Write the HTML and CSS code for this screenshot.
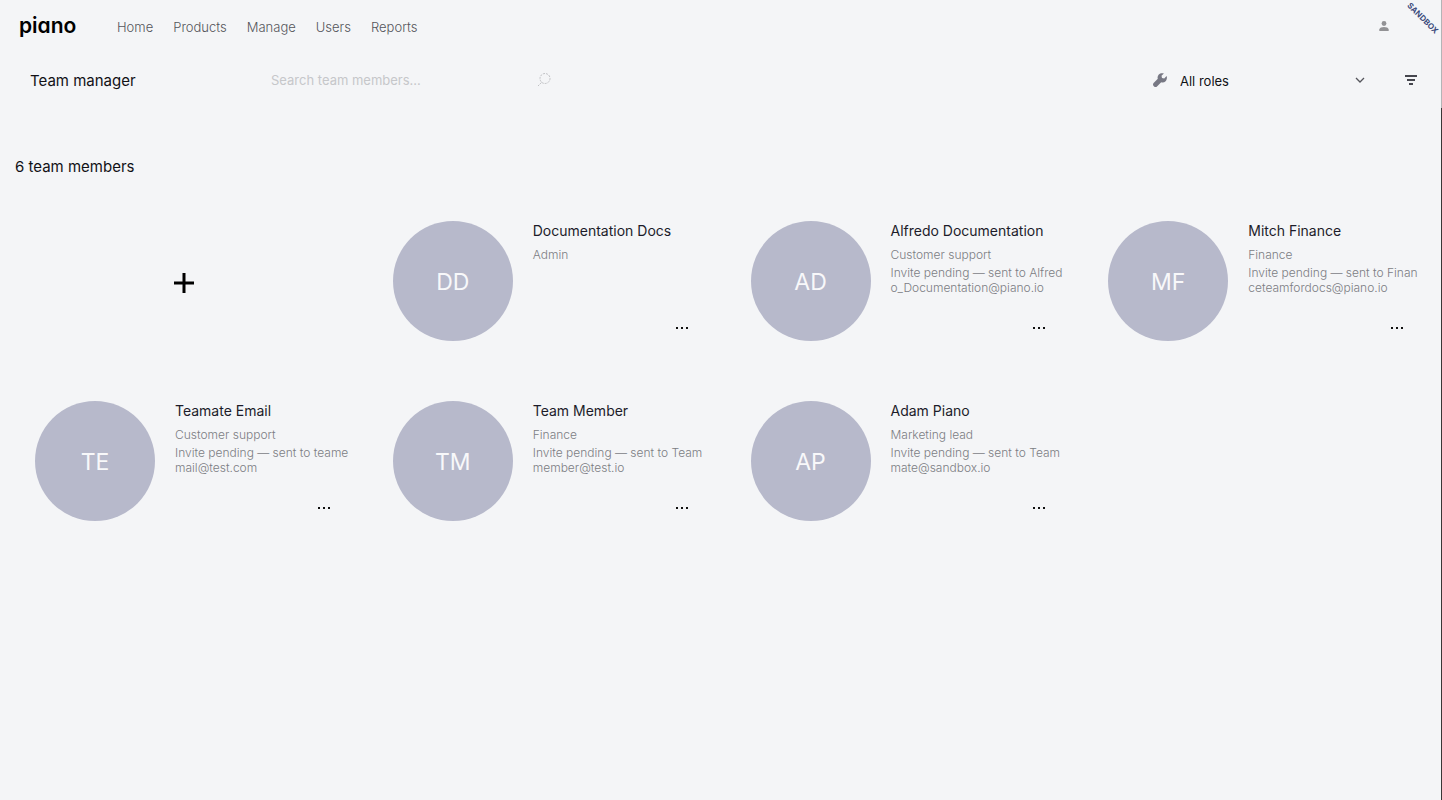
FILE: index.html
```html
<!DOCTYPE html>
<html lang="en">
<head>
    <meta charset="UTF-8">
    <meta name="viewport" content="width=device-width, initial-scale=1.0">
    <title>Team manager - Piano</title>
    <link rel="stylesheet" href="styles.css">
</head>
<body>
    <header class="topbar">
        <a class="logo" href="#">piano</a>
        <nav>
            <ul>
                <li><a href="#">Home</a></li>
                <li><a href="#">Products</a></li>
                <li><a href="#">Manage</a></li>
                <li><a href="#">Users</a></li>
                <li><a href="#">Reports</a></li>
            </ul>
        </nav>
        <button class="account" type="button" aria-label="Account">
            <svg width="10" height="10" viewBox="0 0 10 10"><circle cx="5" cy="2.5" r="2.4"/><path d="M0.3 10V8.6C0.3 6.9 3 6.1 5 6.1s4.7.8 4.7 2.5V10z"/></svg>
        </button>
        <span class="sandbox">SANDBOX</span>
    </header>

    <div class="toolbar">
        <h1>Team manager</h1>
        <form class="search">
            <input type="text" aria-label="Search team members" placeholder="Search team members...">
            <button type="button" aria-label="Search">
                <svg width="14" height="14" viewBox="0 0 14 14"><circle cx="8" cy="5.5" r="5"/><path d="M4.5 9.5L0.5 13.5"/></svg>
            </button>
        </form>
        <div class="roles">
            <svg class="wrench" width="14" height="14" viewBox="0 0 14 14"><path d="M13.6 3.1 11.2 5.5 9 5 8.5 2.8 10.9.5C9.2-.2 7.1.1 5.8 1.4 4.6 2.6 4.3 4.3 4.8 5.8L.6 10c-.8.8-.8 2.1 0 2.9l.5.5c.8.8 2.1.8 2.9 0L8.2 9.2c1.5.5 3.2.2 4.4-1C13.9 6.9 14.2 4.8 13.6 3.1z"/></svg>
            <select aria-label="Role">
                <option>All roles</option>
            </select>
            <svg class="chevron" width="10" height="6" viewBox="0 0 10 6"><path d="M1 1l4 4 4-4"/></svg>
        </div>
        <button class="filter" type="button" aria-label="Filter">
            <svg width="12" height="11" viewBox="0 0 12 11"><path d="M0 1h12M2 5h8M4 9h4"/></svg>
        </button>
    </div>

    <main>
        <h2>6 team members</h2>
        <div class="members">
            <button class="add-member" type="button" aria-label="Add team member">
                <svg width="20" height="20" viewBox="0 0 20 20"><path d="M10 0v20M0 10h20"/></svg>
            </button>
            <article class="member">
                <div class="avatar">DD</div>
                <div class="info">
                    <h3>Documentation Docs</h3>
                    <p class="role">Admin</p>
                    <button class="more" type="button" aria-label="More"><i></i><i></i><i></i></button>
                </div>
            </article>
            <article class="member">
                <div class="avatar">AD</div>
                <div class="info">
                    <h3>Alfredo Documentation</h3>
                    <p class="role">Customer support</p>
                    <p class="invite">Invite pending — sent to Alfred<br>o_Documentation@piano.io</p>
                    <button class="more" type="button" aria-label="More"><i></i><i></i><i></i></button>
                </div>
            </article>
            <article class="member">
                <div class="avatar">MF</div>
                <div class="info">
                    <h3>Mitch Finance</h3>
                    <p class="role">Finance</p>
                    <p class="invite">Invite pending — sent to Finan<br>ceteamfordocs@piano.io</p>
                    <button class="more" type="button" aria-label="More"><i></i><i></i><i></i></button>
                </div>
            </article>
            <article class="member">
                <div class="avatar">TE</div>
                <div class="info">
                    <h3>Teamate Email</h3>
                    <p class="role">Customer support</p>
                    <p class="invite">Invite pending — sent to teame<br>mail@test.com</p>
                    <button class="more" type="button" aria-label="More"><i></i><i></i><i></i></button>
                </div>
            </article>
            <article class="member">
                <div class="avatar">TM</div>
                <div class="info">
                    <h3>Team Member</h3>
                    <p class="role">Finance</p>
                    <p class="invite">Invite pending — sent to Team<br>member@test.io</p>
                    <button class="more" type="button" aria-label="More"><i></i><i></i><i></i></button>
                </div>
            </article>
            <article class="member">
                <div class="avatar">AP</div>
                <div class="info">
                    <h3>Adam Piano</h3>
                    <p class="role">Marketing lead</p>
                    <p class="invite">Invite pending — sent to Team<br>mate@sandbox.io</p>
                    <button class="more" type="button" aria-label="More"><i></i><i></i><i></i></button>
                </div>
            </article>
        </div>
    </main>
</body>
</html>
```
FILE: styles.css
```css
* {
    box-sizing: border-box;
}
body {
    display: flex;
    flex-direction: column;
    margin: 0;
    min-height: 100vh;
    background-color: #f4f5f7;
    color: #111116;
    font-family: Inter, 'Liberation Sans', sans-serif;
}
h1, h2, h3, p {
    margin: 0;
    font-weight: 400;
}
button {
    padding: 0;
    border: none;
    background: none;
    cursor: pointer;
}
svg {
    display: block;
}
.topbar, .toolbar {
    display: flex;
    align-items: center;
    border-right: 1px solid #b4b4b6;
}
.topbar {
    position: relative;
    height: 52px;
    padding: 0 52px 0 19px;
}
.logo {
    width: 98px;
    color: #000;
    font-size: 21px;
    line-height: 30px;
    font-weight: 600;
    font-feature-settings: "cv11";
    text-decoration: none;
}
nav ul {
    display: flex;
    gap: 20px;
    margin: 0;
    padding: 0;
    list-style: none;
}
nav a {
    color: #55565b;
    font-size: 13px;
    line-height: 20px;
    font-weight: 300;
    text-decoration: none;
}
.account {
    margin-left: auto;
    fill: #929295;
}
.sandbox {
    position: absolute;
    top: 12px;
    right: -2px;
    color: #3c4b7c;
    font-size: 8px;
    line-height: 12px;
    font-weight: 700;
    transform: rotate(45deg);
}
.toolbar {
    height: 56px;
    padding: 0 24px 0 30px;
}
h1 {
    width: 241px;
    font-size: 15px;
}
.search {
    display: flex;
    align-items: center;
    width: 280px;
}
.search input {
    flex: 1;
    min-width: 0;
    padding: 0;
    border: none;
    outline: none;
    background: none;
    font-family: inherit;
    font-size: 13px;
}
.search input::placeholder {
    color: #c6c7ca;
}
.search svg {
    fill: none;
    stroke: #c0c1c4;
    stroke-dasharray: 2 1;
}
.roles {
    display: flex;
    align-items: center;
    width: 212px;
    margin: 0 40px 0 auto;
}
.wrench {
    fill: #777884;
}
.roles select {
    flex: 1;
    padding: 2px 0 0 13px;
    border: none;
    appearance: none;
    background: none;
    color: #111116;
    font-family: inherit;
    font-size: 13px;
}
.chevron {
    fill: none;
    stroke: #55565c;
    stroke-width: 1.3;
}
.filter {
    stroke: #45464e;
    stroke-width: 2;
}
main {
    flex: 1;
    padding: 49px 5px 0;
    border-right: 1px solid #3a3636;
}
h2 {
    padding-left: 10px;
    font-size: 15px;
    line-height: 20px;
}
.members {
    display: grid;
    grid-template-columns: repeat(4, minmax(0, 1fr));
    margin-top: 14px;
}
.member {
    display: flex;
    gap: 20px;
    padding: 30px;
}
.avatar {
    display: flex;
    align-items: center;
    justify-content: center;
    flex: 0 0 120px;
    height: 120px;
    padding-top: 2px;
    border-radius: 50%;
    background-color: #b7b9cb;
    color: #f8f8fa;
    font-size: 23px;
}
.info {
    display: flex;
    flex-direction: column;
    flex: 1;
    min-width: 0;
    white-space: nowrap;
}
h3 {
    color: #1c1c2a;
    font-size: 14px;
    line-height: 20px;
}
.role, .invite {
    color: #7c7d83;
    font-size: 12px;
    line-height: 15px;
    font-weight: 300;
}
.role {
    margin: 6px 0 3px;
}
.more {
    display: flex;
    gap: 3px;
    align-self: flex-end;
    margin: auto 3px 12px 0;
}
.more i {
    width: 2px;
    height: 2px;
    background-color: #111;
}
.add-member {
    display: flex;
    align-items: center;
    justify-content: center;
    padding-top: 4px;
    stroke: #000;
    stroke-width: 3;
}
```
